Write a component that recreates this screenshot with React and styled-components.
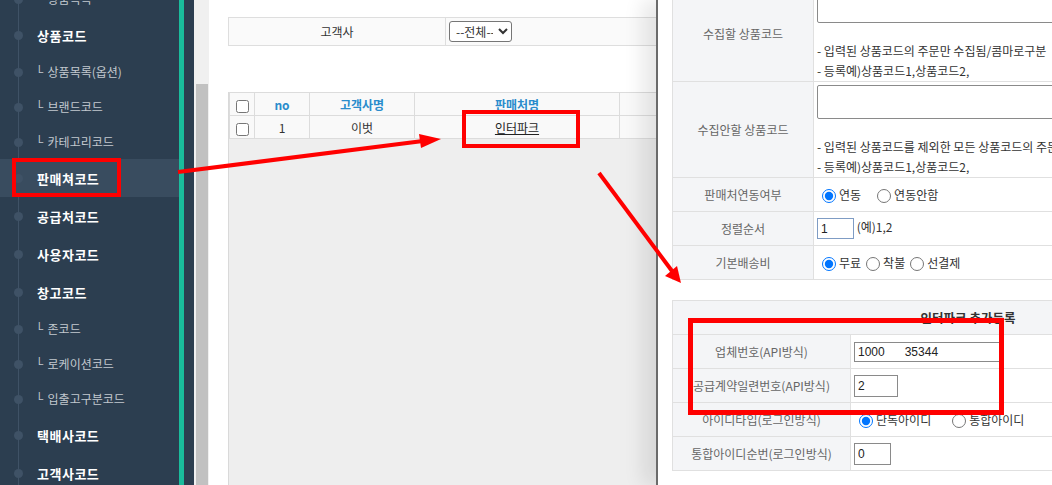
import React from 'react';
import styled, { createGlobalStyle } from 'styled-components';

const GlobalStyle = createGlobalStyle`
  html, body {
    margin: 0;
    padding: 0;
  }
  body {
    font-family: "Noto Sans CJK KR", "Noto Sans", sans-serif;
    font-size: 12px;
    color: #333;
    background: #fff;
    overflow: hidden;
  }
`;

const Page = styled.div`
  position: relative;
  display: flex;
  width: 1052px;
  height: 485px;
  overflow: hidden;
  background: #fff;
`;

/* 왼쪽 메뉴 */
const Sidebar = styled.nav`
  position: relative;
  flex: none;
  width: 179px;
  background: #2c3e50;
  overflow: hidden;

  &::before {
    content: '';
    position: absolute;
    left: 18px;
    top: 0;
    bottom: 0;
    width: 1px;
    background: #3f5266;
  }
`;

const MenuList = styled.ul`
  list-style: none;
  margin: -19px 0 0;
  padding: 0;
`;

const MenuItem = styled.li`
  position: relative;
  display: flex;
  align-items: center;
  height: ${p => (p.$sub ? 35 : 38)}px;
  padding-left: ${p => (p.$sub ? 38 : 37)}px;
  background: ${p => (p.$active ? '#394c5f' : 'transparent')};
  color: ${p => (p.$sub ? '#c3c9cf' : '#fff')};
  font-size: ${p => (p.$sub ? 12 : 13)}px;
  font-weight: ${p => (p.$sub ? 400 : 700)};
  letter-spacing: ${p => (p.$sub ? 0 : 0.5)}px;

  &::before {
    content: '';
    position: absolute;
    left: 14px;
    top: 50%;
    width: 9px;
    height: 9px;
    margin-top: -4px;
    border-radius: 50%;
    background: #3f5266;
  }
`;

const SubMark = styled.span`
  font-family: "Liberation Sans", Arial, sans-serif;
  font-size: 10px;
  margin-right: 4px;
  position: relative;
  top: -2px;
`;

const Stripe = styled.div`
  flex: none;
  width: 5px;
  background: #1abc9c;
`;

const Gutter = styled.div`
  flex: none;
  width: 10px;
  background: #2c3e50;
`;

const ScrollTrack = styled.div`
  flex: none;
  width: 15px;
  background: #f0f0f0;
  padding: 84px 1px 0 2px;
  box-sizing: border-box;
  display: flex;
`;

const ScrollThumb = styled.div`
  flex: 1;
  background: #c1c1c1;
`;

/* 본문 */
const Main = styled.main`
  flex: 1;
  display: flex;
  flex-direction: column;
  padding: 17px 0 0 19px;
  min-width: 0;
`;

const SearchTable = styled.table`
  width: 900px;
  border-collapse: collapse;
  background: #fafafa;

  td {
    border: 1px solid #dedede;
    height: 27px;
    padding: 0 3px;
  }
`;

const SearchLabel = styled.td`
  width: 210px;
  text-align: center;
  color: #333;
`;

const Select = styled.select`
  font-family: inherit;
  font-size: 12px;
  height: 21px;
  width: 63px;
  border: 1px solid #767676;
  border-radius: 3px;
  background: #fff;
  color: #333;
  padding: 0 2px;
`;

const ListBox = styled.div`
  flex: 1;
  margin-top: 46px;
  width: 900px;
  background: #eeeeee;
  border-left: 1px solid #d9d9d9;
`;

const ListTable = styled.table`
  width: 100%;
  border-collapse: collapse;
  background: #f9f9f9;

  th, td {
    border: 1px solid #dcdcdc;
    height: 22px;
    padding: 0;
    text-align: center;
  }
  th {
    color: #2a8ccc;
    font-weight: 700;
  }
  td {
    color: #333;
  }
`;

const Col = styled.col`
  width: ${p => p.$w}px;
`;

const Check = styled.input.attrs({ type: 'checkbox' })`
  width: 13px;
  height: 13px;
  margin: 0;
  vertical-align: middle;
`;

const LinkText = styled.span`
  text-decoration: underline;
  color: #222;
`;

/* 팝업 */
const Popup = styled.aside`
  position: absolute;
  top: 0;
  bottom: 0;
  left: 656px;
  right: 0;
  background: #fff;
  border-left: 2px solid #6b6b6b;
  box-shadow: -14px 0 18px rgba(0, 0, 0, 0.09);
  padding-left: 14px;
  overflow: hidden;
`;

const FormTable = styled.table`
  width: ${p => p.$w}px;
  table-layout: fixed;
  border-collapse: collapse;
  margin-top: ${p => p.$top}px;

  th, td {
    border: 1px solid #e0e0e0;
    height: 33px;
    padding: 0 3px;
  }
  th {
    background: #f4f5f7;
    color: #666;
    font-weight: 400;
    text-align: center;
    white-space: nowrap;
    padding: 0;
  }
  td {
    color: #333;
    text-align: left;
    white-space: nowrap;
  }
`;

const TitleCell = styled.th.attrs({ colSpan: 2 })`
  && {
    color: #333;
    font-weight: 700;
    font-size: 12.5px;
  }
`;

const AreaCell = styled.td`
  && {
    padding: 3px 3px 0;
    vertical-align: top;
  }
`;

const TextArea = styled.textarea`
  display: block;
  width: 560px;
  height: 34px;
  box-sizing: border-box;
  border: 1px solid #8a8a8a;
  border-radius: 2px;
  margin: 0 0 18px;
  resize: none;
`;

const Note = styled.div`
  line-height: 20px;
  color: #333;
  white-space: nowrap;
`;

const Radio = styled.input.attrs({ type: 'radio' })`
  width: 14px;
  height: 14px;
  margin: 0 3px 0 5px;
  vertical-align: -3px;
`;

const RadioLabel = styled.label`
  margin-right: ${p => p.$gap || 0}px;
  white-space: nowrap;
`;

const TextInput = styled.input.attrs({ type: 'text' })`
  width: ${p => p.$w}px;
  height: ${p => p.$h || 21}px;
  box-sizing: border-box;
  border: 1px solid ${p => (p.$focus ? '#7f9cc4' : '#8a8a8a')};
  font-family: "Liberation Sans", Arial, sans-serif;
  font-size: 12px;
  color: #222;
  padding: 0 3px;
  margin: 0;
  vertical-align: middle;
`;

const Annotations = styled.svg`
  position: absolute;
  inset: 0;
  pointer-events: none;
`;

const menu = [
  { label: '상품목록', sub: true },
  { label: '상품코드' },
  { label: '상품목록(옵션)', sub: true },
  { label: '브랜드코드', sub: true },
  { label: '카테고리코드', sub: true },
  { label: '판매쳐코드', active: true },
  { label: '공급처코드' },
  { label: '사용자코드' },
  { label: '창고코드' },
  { label: '존코드', sub: true },
  { label: '로케이션코드', sub: true },
  { label: '입출고구분코드', sub: true },
  { label: '택배사코드' },
  { label: '고객사코드' },
];

export default function App() {
  return (
    <Page>
      <GlobalStyle />
      <Sidebar>
        <MenuList>
          {menu.map((m, i) => (
            <MenuItem key={i} $sub={m.sub} $active={m.active}>
              {m.sub && <SubMark>L</SubMark>}
              {m.label}
            </MenuItem>
          ))}
        </MenuList>
      </Sidebar>
      <Stripe />
      <Gutter />
      <ScrollTrack>
        <ScrollThumb />
      </ScrollTrack>

      <Main>
        <SearchTable>
          <tbody>
            <tr>
              <SearchLabel>고객사</SearchLabel>
              <td>
                <Select defaultValue="">
                  <option value="">--전체--</option>
                </Select>
              </td>
            </tr>
          </tbody>
        </SearchTable>

        <ListBox>
          <ListTable>
            <colgroup>
              <Col $w={25} />
              <Col $w={55} />
              <Col $w={105} />
              <Col $w={205} />
              <col />
            </colgroup>
            <thead>
              <tr>
                <th><Check /></th>
                <th>no</th>
                <th>고객사명</th>
                <th>판매처명</th>
                <th />
              </tr>
            </thead>
            <tbody>
              <tr>
                <td><Check /></td>
                <td>1</td>
                <td>이벗</td>
                <td><LinkText>인터파크</LinkText></td>
                <td />
              </tr>
            </tbody>
          </ListTable>
        </ListBox>
      </Main>

      <Popup>
        <FormTable $top={-15} $w={800}>
          <colgroup>
            <Col $w={141} />
            <col />
          </colgroup>
          <tbody>
            <tr>
              <th>수집할 상품코드</th>
              <AreaCell>
                <TextArea />
                <Note>
                  - 입력된 상품코드의 주문만 수집됨/콤마로구분
                  <br />- 등록예)상품코드1,상품코드2,
                </Note>
              </AreaCell>
            </tr>
            <tr>
              <th>수집안할 상품코드</th>
              <AreaCell>
                <TextArea />
                <Note>
                  - 입력된 상품코드를 제외한 모든 상품코드의 주문이 수집됨
                  <br />- 등록예)상품코드1,상품코드2,
                </Note>
              </AreaCell>
            </tr>
            <tr>
              <th>판매처연동여부</th>
              <td>
                <RadioLabel $gap={11}><Radio name="link" defaultChecked />연동</RadioLabel>
                <RadioLabel><Radio name="link" />연동안함</RadioLabel>
              </td>
            </tr>
            <tr>
              <th>정렬순서</th>
              <td>
                <TextInput $w={37} $focus defaultValue="1" /> (예)1,2
              </td>
            </tr>
            <tr>
              <th>기본배송비</th>
              <td>
                <RadioLabel><Radio name="fee" defaultChecked />무료</RadioLabel>
                <RadioLabel><Radio name="fee" />착불</RadioLabel>
                <RadioLabel><Radio name="fee" />선결제</RadioLabel>
              </td>
            </tr>
          </tbody>
        </FormTable>

        <FormTable $top={20} $w={592}>
          <colgroup>
            <Col $w={178} />
            <col />
          </colgroup>
          <tbody>
            <tr>
              <TitleCell>인터파크 추가등록</TitleCell>
            </tr>
            <tr>
              <th>업체번호(API방식)</th>
              <td><TextInput $w={146} $h={20} defaultValue="1000      35344" /></td>
            </tr>
            <tr>
              <th>공급계약일련번호(API방식)</th>
              <td><TextInput $w={44} $h={22} defaultValue="2" /></td>
            </tr>
            <tr>
              <th>아이디타입(로그인방식)</th>
              <td>
                <RadioLabel $gap={16}><Radio name="idtype" defaultChecked />단독아이디</RadioLabel>
                <RadioLabel><Radio name="idtype" />통합아이디</RadioLabel>
              </td>
            </tr>
            <tr>
              <th>통합아이디순번(로그인방식)</th>
              <td><TextInput $w={37} $h={22} defaultValue="0" /></td>
            </tr>
          </tbody>
        </FormTable>
      </Popup>

      <Annotations width="1052" height="485" viewBox="0 0 1052 485">
        <g fill="none" stroke="#ff0000">
          <rect x="14" y="160" width="105" height="35" strokeWidth="4" />
          <rect x="464" y="112" width="114" height="34" strokeWidth="4" />
          <rect x="690.5" y="320.5" width="311" height="92" strokeWidth="5" />
          <line x1="178" y1="172" x2="423" y2="141" strokeWidth="4" />
          <line x1="599" y1="173" x2="672" y2="271" strokeWidth="4" />
        </g>
        <g fill="#ff0000">
          <polygon points="441,139 421,148 419,134" />
          <polygon points="681,283 665,276 677,266" />
        </g>
      </Annotations>
    </Page>
  );
}
